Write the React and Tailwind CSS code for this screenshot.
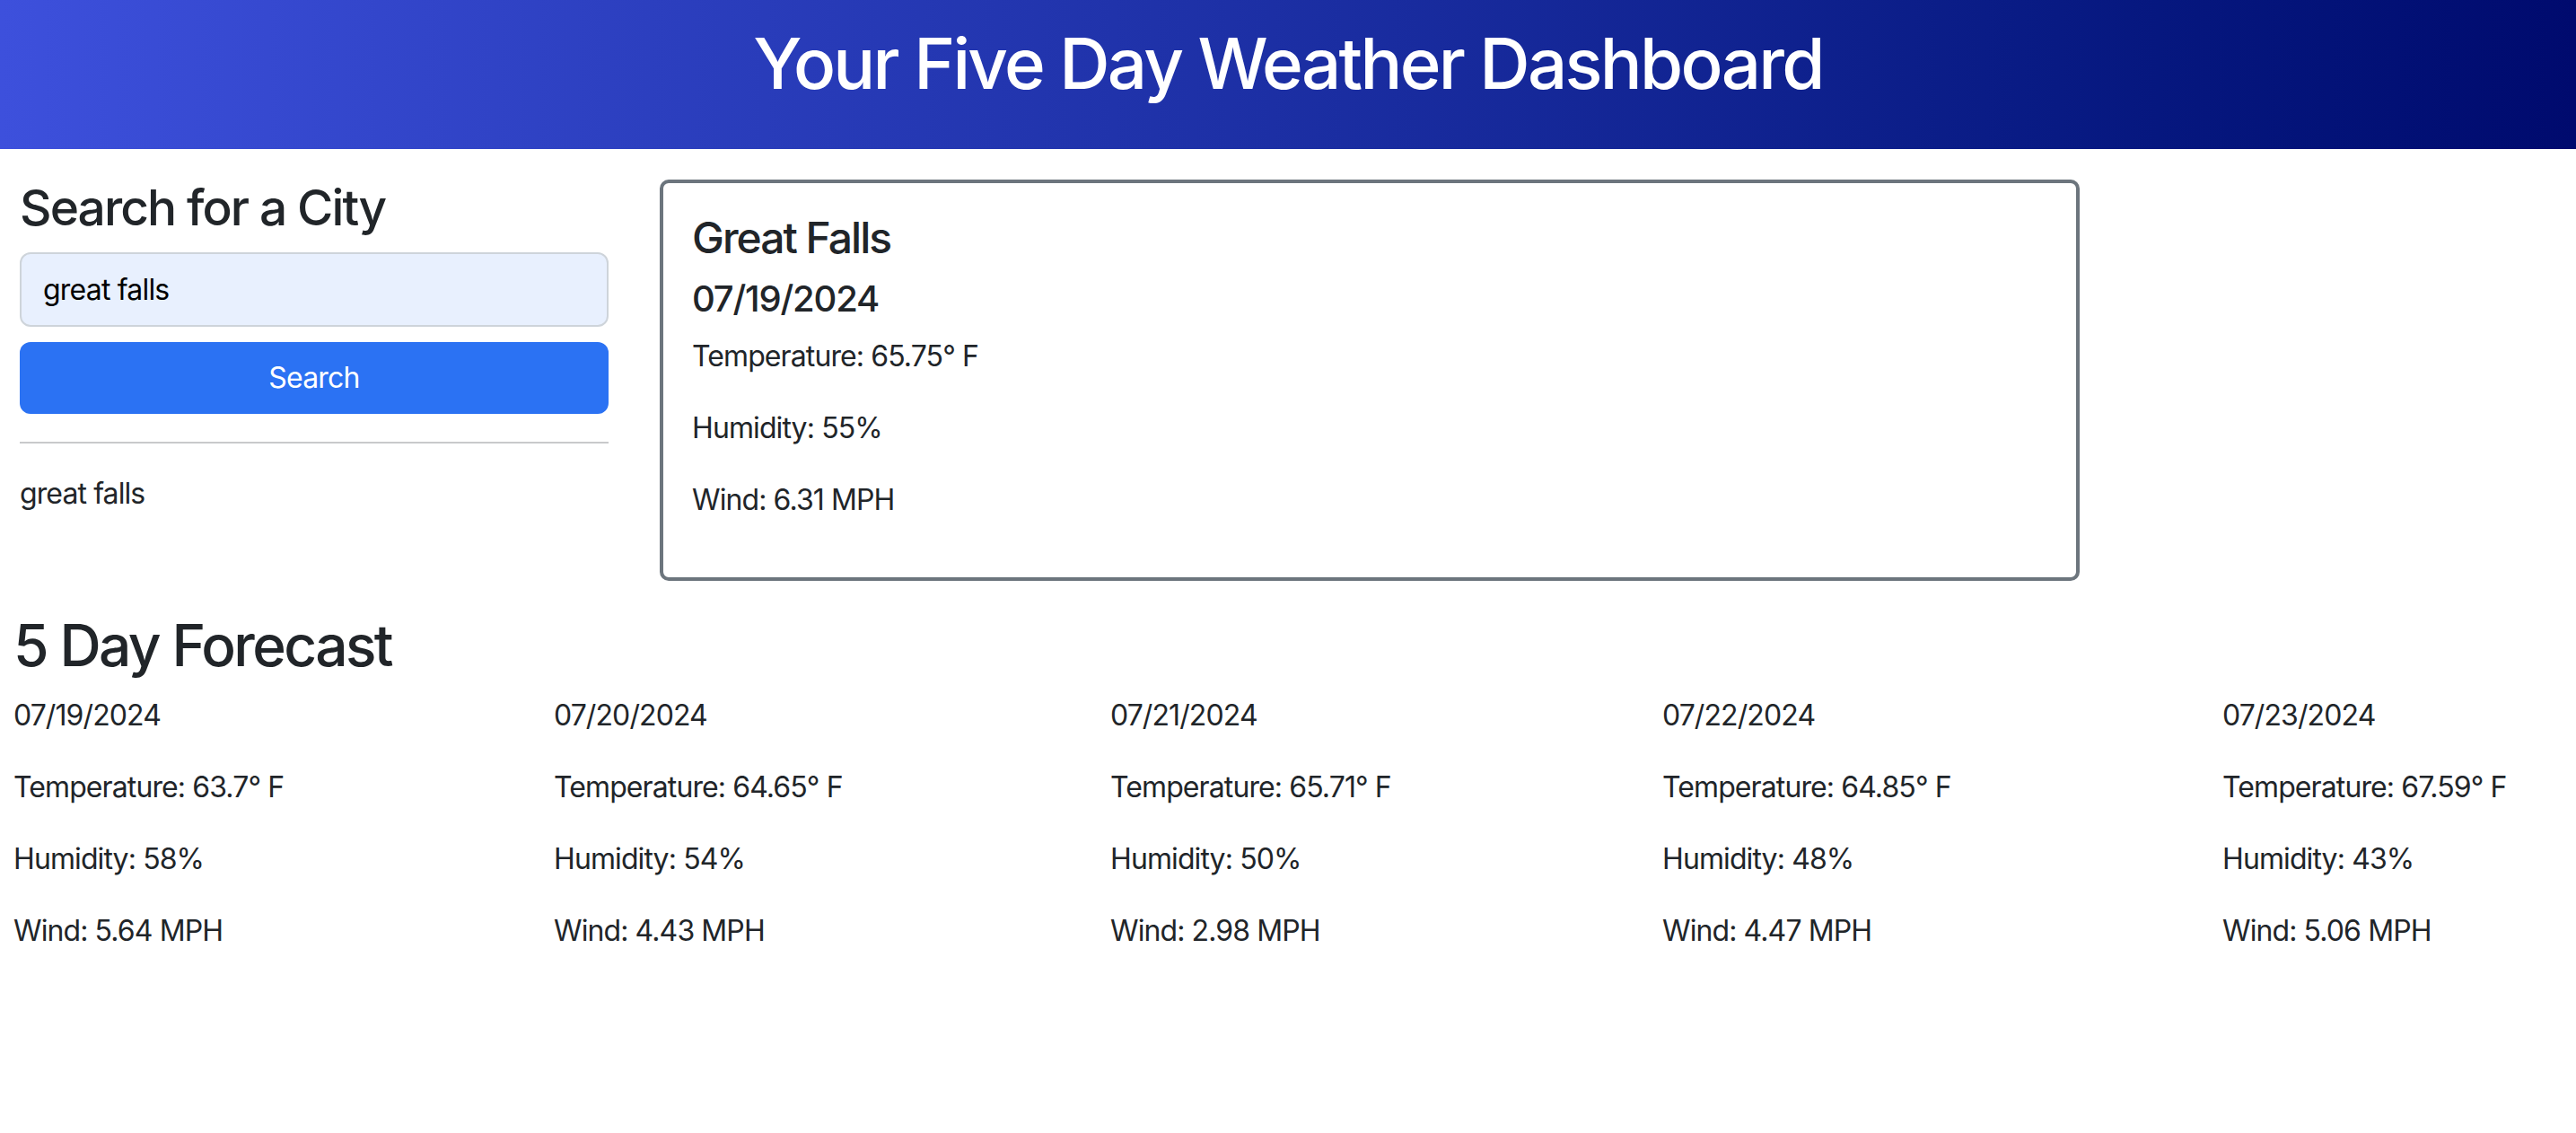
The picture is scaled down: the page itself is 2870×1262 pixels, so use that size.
import React, { useState } from "react";

const forecast = [
  { date: "07/19/2024", temp: "63.7", humidity: "58", wind: "5.64" },
  { date: "07/20/2024", temp: "64.65", humidity: "54", wind: "4.43" },
  { date: "07/21/2024", temp: "65.71", humidity: "50", wind: "2.98" },
  { date: "07/22/2024", temp: "64.85", humidity: "48", wind: "4.47" },
  { date: "07/23/2024", temp: "67.59", humidity: "43", wind: "5.06" },
];

export default function App() {
  const [city, setCity] = useState("great falls");
  const [history] = useState(["great falls"]);

  return (
    <div className="min-h-screen bg-white text-[#212529] font-['Inter','Liberation_Sans',sans-serif]">
      <header className="h-[166px] pt-[23px] bg-linear-to-r from-[#3d50dc] to-[#000a6e] text-center">
        <h1 className="text-[78px] leading-[96px] font-medium text-white tracking-[-2.7px]">
          Your Five Day Weather Dashboard
        </h1>
      </header>

      <main className="flex gap-[57px] px-[22px] pt-[32px]">
        <section className="w-[656px] shrink-0">
          <h3 className="text-[55px] leading-[67px] font-medium tracking-[-1.9px]">Search for a City</h3>
          <input
            type="text"
            value={city}
            onChange={(e) => setCity(e.target.value)}
            className="mt-[16px] block w-full h-[83px] px-[24px] text-[32px] text-black bg-[#e8f0fe] border-2 border-[#ced4da] rounded-[12px] outline-none tracking-[-0.8px]"
          />
          <button className="mt-[17px] w-full h-[80px] bg-[#2b72f3] text-white text-[32px] rounded-[12px] tracking-[-0.8px]">
            Search
          </button>
          <hr className="mt-[31px] border-t-2 border-[#c8c9cb]" />
          <div className="mt-[32px]">
            {history.map((item) => (
              <p key={item} className="text-[32px] leading-[48px] tracking-[-0.9px]">{item}</p>
            ))}
          </div>
        </section>

        <section className="mt-[2px] w-[1582px] h-[447px] border-4 border-[#6c757d] rounded-[10px] p-[32px]">
          <h4 className="text-[48px] leading-[57px] font-medium tracking-[-2px]">Great Falls</h4>
          <h5 className="mt-[16px] text-[40px] leading-[48px] font-medium tracking-[-1.2px]">07/19/2024</h5>
          <p className="mt-[16px] text-[32px] leading-[48px] tracking-[-0.9px]">Temperature: 65.75° F</p>
          <p className="mt-[32px] text-[32px] leading-[48px] tracking-[-0.9px]">Humidity: 55%</p>
          <p className="mt-[32px] text-[32px] leading-[48px] tracking-[-0.9px]">Wind: 6.31 MPH</p>
        </section>
      </main>

      <section className="px-[15px] pt-[33px]">
        <h2 className="text-[64px] leading-[77px] font-medium tracking-[-2.6px]">5 Day Forecast</h2>
        <div className="mt-[16px] grid grid-cols-[602px_620px_615px_624px_auto]">
          {forecast.map((day) => (
            <div key={day.date} className="text-[32px] leading-[48px] tracking-[-0.9px]">
              <p className="mb-[32px]">{day.date}</p>
              <p className="mb-[32px]">Temperature: {day.temp}° F</p>
              <p className="mb-[32px]">Humidity: {day.humidity}%</p>
              <p className="mb-[32px]">Wind: {day.wind} MPH</p>
            </div>
          ))}
        </div>
      </section>
    </div>
  );
}
